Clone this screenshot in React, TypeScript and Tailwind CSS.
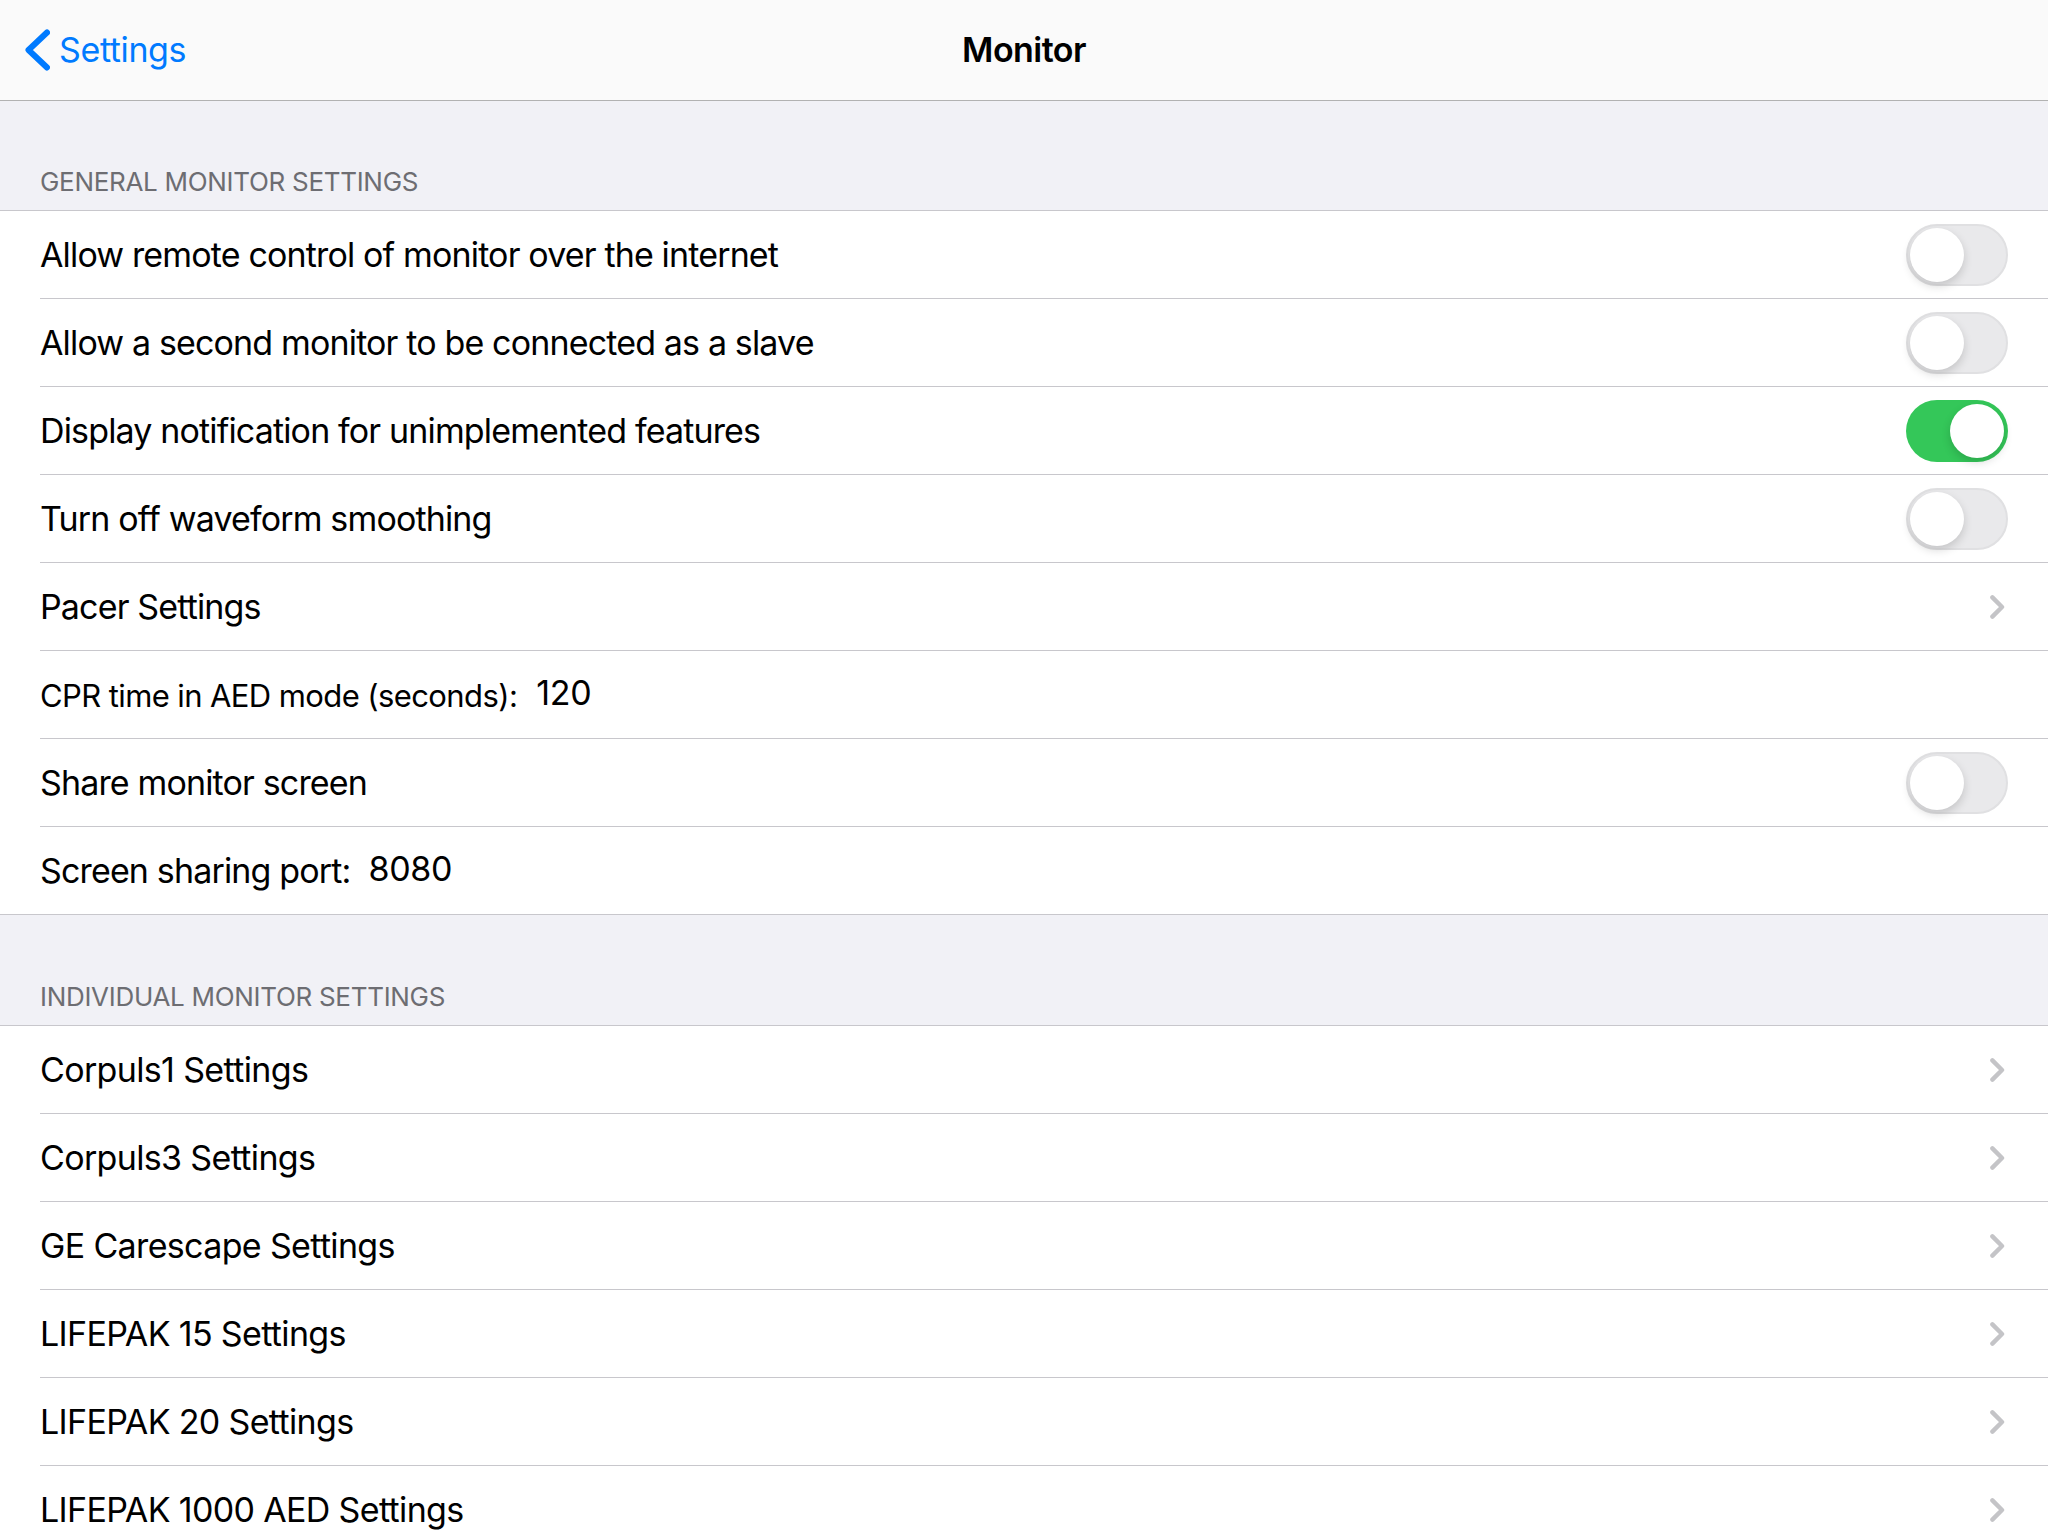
import { ReactNode } from 'react';

const font = 'font-["Inter",sans-serif]';

function Switch({ on = false }: { on?: boolean }) {
  return (
    <div className={`relative h-[62px] w-[102px] shrink-0 rounded-full ${on ? 'bg-[#34c759]' : 'border-2 border-[#e0e0e2] bg-[#e9e9eb]'}`}>
      <div
        className={`absolute h-[54px] w-[54px] rounded-full bg-white shadow-[0_4px_10px_rgba(0,0,0,0.16)] ${on ? 'left-[44px] top-1' : 'left-[2px] top-[2px]'}`}
      />
    </div>
  );
}

function Disclosure() {
  return (
    <svg width="15" height="24" viewBox="0 0 15 24" fill="none" className="mr-[3px] shrink-0">
      <path d="M2.4 2.4 12 12l-9.6 9.6" stroke="#c4c4c7" strokeWidth="4.4" strokeLinecap="round" strokeLinejoin="round" />
    </svg>
  );
}

function Row({ children, last = false, tight = false }: { children: ReactNode; last?: boolean; tight?: boolean }) {
  return (
    <div className={last ? 'border-b border-[#c8c7cc] pl-10' : 'pl-10'}>
      <div
        className={`flex items-center justify-between pr-[40px] text-[34px] text-black ${tight ? 'tracking-[-0.65px]' : 'tracking-[-0.85px]'} ${last ? 'h-[87px]' : 'h-[88px] border-b border-[#c8c7cc]'}`}
      >
        {children}
      </div>
    </div>
  );
}

function SectionHeader({ title, tall = false }: { title: string; tall?: boolean }) {
  return (
    <div
      className={`flex items-end border-b border-[#c8c7cc] bg-[#f1f1f6] pb-[9px] pl-10 text-[26px] uppercase tracking-[-0.3px] text-[#6d6d72] ${tall ? 'h-[111px]' : 'h-[110px]'}`}
    >
      {title}
    </div>
  );
}

const monitors = ['Corpuls1 Settings', 'Corpuls3 Settings', 'GE Carescape Settings', 'LIFEPAK 15 Settings', 'LIFEPAK 20 Settings', 'LIFEPAK 1000 AED Settings'];

export default function App() {
  return (
    <div className={`h-[1536px] w-[2048px] overflow-hidden bg-white ${font}`}>
      <div className="relative flex h-[101px] items-center border-b border-[#b2b2b2] bg-[#fafafa]">
        <div className="flex items-center gap-[9px] pl-[24px] text-[34px] tracking-[-0.38px] text-[#007aff]">
          <svg width="26" height="42" viewBox="0 0 26 42" fill="none">
            <path d="M23 3.5 4.5 21 23 38.5" stroke="#007aff" strokeWidth="6" strokeLinecap="round" strokeLinejoin="round" />
          </svg>
          <span className="-translate-y-[1px]">Settings</span>
        </div>
        <div className="absolute inset-x-0 -translate-y-[1px] text-center text-[34px] font-semibold tracking-[-0.55px] text-black">Monitor</div>
      </div>
      <SectionHeader title="General Monitor Settings" />
      <Row>
        <span>Allow remote control of monitor over the internet</span>
        <Switch />
      </Row>
      <Row>
        <span>Allow a second monitor to be connected as a slave</span>
        <Switch />
      </Row>
      <Row>
        <span>Display notification for unimplemented features</span>
        <Switch on />
      </Row>
      <Row>
        <span>Turn off waveform smoothing</span>
        <Switch />
      </Row>
      <Row>
        <span>Pacer Settings</span>
        <Disclosure />
      </Row>
      <Row>
        <div className="flex items-center gap-[19px]">
          <span className="translate-y-[2px] text-[31px] tracking-[-0.6px]">CPR time in AED mode (seconds):</span>
          <span className="-translate-y-[2px] tracking-[-0.3px]">120</span>
        </div>
      </Row>
      <Row>
        <span>Share monitor screen</span>
        <Switch />
      </Row>
      <Row last>
        <div className="flex items-center gap-[18px]">
          <span>Screen sharing port:</span>
          <span className="-translate-y-[2px] tracking-[-0.3px]">8080</span>
        </div>
      </Row>
      <SectionHeader title="Individual Monitor Settings" tall />
      {monitors.map(name => (
        <Row key={name} tight>
          <span>{name}</span>
          <Disclosure />
        </Row>
      ))}
    </div>
  );
}
